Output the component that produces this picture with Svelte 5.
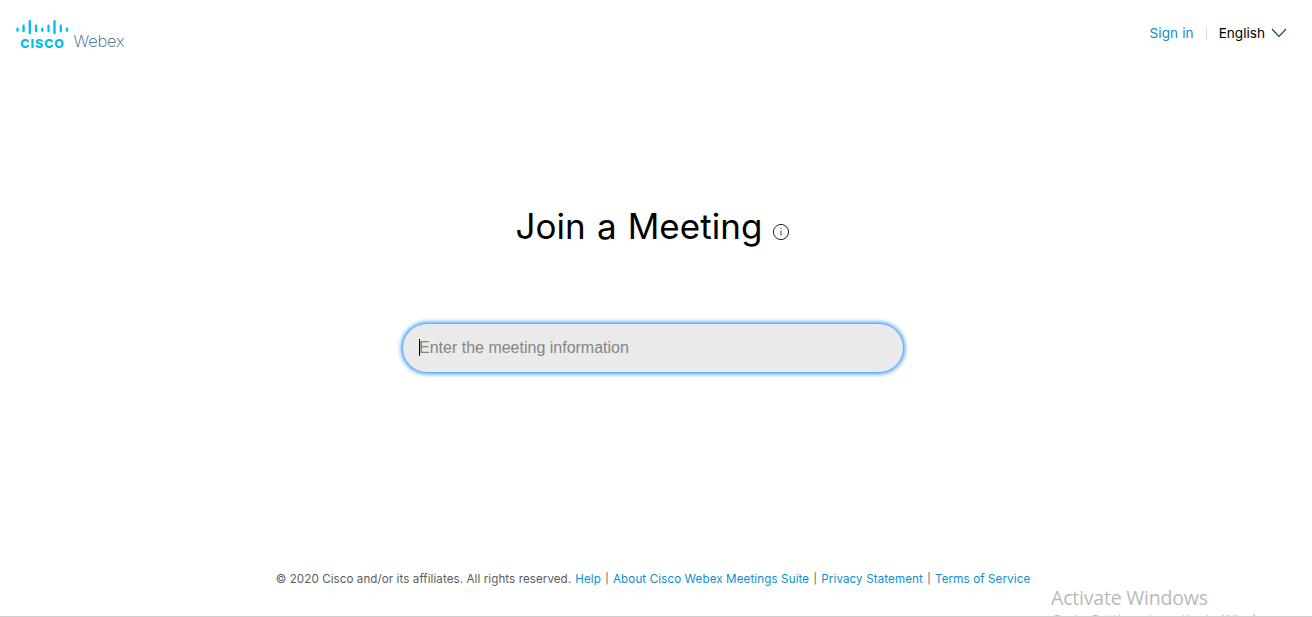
<script>
	let meeting = "";
	let language = "English";

	const bars = [
		{ x: 17.5, y: 27.5, h: 4.5 },
		{ x: 23.6, y: 24.5, h: 7.8 },
		{ x: 29.8, y: 20, h: 14.5 },
		{ x: 36, y: 24.5, h: 7.8 },
		{ x: 42.3, y: 27.5, h: 4.5 },
		{ x: 48.5, y: 24.5, h: 7.8 },
		{ x: 54.5, y: 20, h: 14.5 },
		{ x: 60.8, y: 24.5, h: 7.8 },
		{ x: 67, y: 27.5, h: 4.5 },
	];

	const links = [
		"Help",
		"About Cisco Webex Meetings Suite",
		"Privacy Statement",
		"Terms of Service",
	];
</script>

<div class="page">
	<header>
		<svg class="logo" width="140" height="60" viewBox="0 0 140 60">
			{#each bars as bar}
				<rect
					x={bar.x - 1.15}
					y={bar.y}
					width="2.3"
					height={bar.h}
					rx="1.15"
					fill="#00bceb"
				/>
			{/each}
			<text class="cisco" x="20.3" y="47.8" textLength="43.6">CISCO</text>
			<text class="webex" x="73.5" y="47" textLength="51">Webex</text>
		</svg>
		<nav>
			<a href="#signin">Sign in</a>
			<span class="divider"></span>
			<span class="language">{language}</span>
			<svg width="16" height="10" viewBox="0 0 16 10">
				<path d="M1 1 L8 8.5 L15 1" fill="none" stroke="#23335c" stroke-width="1.1" />
			</svg>
		</nav>
	</header>

	<main>
		<div class="title">
			<h1>Join a Meeting</h1>
			<svg width="18" height="18" viewBox="0 0 18 18">
				<circle cx="9" cy="9" r="7.6" fill="none" stroke="#222" stroke-width="1" />
				<path d="M9 7.6 V12.6" stroke="#333" stroke-width="1" />
				<circle cx="9" cy="5.6" r="0.7" fill="#333" />
			</svg>
		</div>
		<div class="field">
			<span class="caret"></span>
			<input placeholder="Enter the meeting information" bind:value={meeting} />
		</div>
	</main>

	<footer>
		<span class="copyright">© 2020 Cisco and/or its affiliates. All rights reserved.</span>
		{#each links as link, index}
			{#if index > 0}<span class="bar">|</span>{/if}
			<a href="#{index}">{link}</a>
		{/each}
	</footer>

	<div class="watermark">
		<div class="big">Activate Windows</div>
		<div class="small">Go to Settings to activate Windows.</div>
	</div>
</div>

<style>
	:global(body) {
		background: #fff;
		overflow: hidden;
	}

	.page {
		position: relative;
		box-sizing: border-box;
		display: flex;
		flex-direction: column;
		height: 617px;
		overflow: hidden;
		border-bottom: 1px solid #cfcfcf;
		font-family: Inter, "Liberation Sans", sans-serif;
	}

	header {
		display: flex;
		justify-content: space-between;
		height: 66px;
	}

	.cisco {
		font: 800 12.4px Inter, sans-serif;
		fill: #00bceb;
	}

	.webex {
		font: 200 16.5px Inter, sans-serif;
		fill: #2d617f;
	}

	nav {
		display: flex;
		align-items: center;
		height: 65px;
		padding-right: 25px;
		font-size: 13.6px;
	}

	nav a {
		letter-spacing: 0.1px;
	}

	a {
		color: #0a8fd0;
		text-decoration: none;
	}

	.divider {
		width: 1px;
		height: 12px;
		margin: 3px 12px 0;
		background: #d8d8d8;
	}

	.language {
		margin-right: 6px;
	}

	main {
		display: flex;
		flex: 1;
		flex-direction: column;
		align-items: center;
	}

	.title {
		display: flex;
		align-items: center;
		height: 50px;
		margin: 135px 7px 0 0;
	}

	.title svg {
		margin: 11px 0 0 9px;
	}

	h1 {
		margin: 0 0 1px;
		font-size: 35px;
		font-weight: 400;
		letter-spacing: 0.05px;
		line-height: 50px;
		white-space: nowrap;
		word-spacing: 1.2px;
	}

	.field {
		box-sizing: border-box;
		display: flex;
		align-items: center;
		width: 502px;
		height: 50px;
		margin: 72px 6px 0 0;
		padding: 0 16px;
		border: 1px solid #66afff;
		border-radius: 25px;
		background: #eaeaea;
		box-shadow: 0 0 4px 1px #409cff;
	}

	.caret {
		width: 1px;
		height: 17px;
		margin-bottom: 1px;
		background: #000;
	}

	input {
		flex: 1;
		margin: 0 0 1px -1px;
		padding: 0;
		border: 0;
		outline: 0;
		background: transparent;
		font: 16px "Liberation Sans", Arial, sans-serif;
	}

	input::placeholder {
		color: #858585;
	}

	footer {
		display: flex;
		justify-content: center;
		gap: 4px;
		height: 46px;
		padding-right: 6px;
		font-size: 11.6px;
		line-height: 18px;
		white-space: nowrap;
	}

	footer a {
		letter-spacing: 0.12px;
	}

	.copyright {
		letter-spacing: 0.08px;
	}

	.copyright,
	.bar {
		color: #5c5c5c;
	}

	.bar {
		width: 4px;
		font-size: 10.5px;
		text-align: center;
	}

	.watermark {
		position: absolute;
		top: 584px;
		left: 1051px;
		font-family: "Open Sans", sans-serif;
		color: #b9b9b9;
		white-space: nowrap;
	}

	.big {
		font-size: 19.5px;
		letter-spacing: -0.2px;
		line-height: 28px;
	}

	.small {
		margin-top: -1px;
		font-size: 14px;
		letter-spacing: 0.18px;
		line-height: 18px;
	}
</style>
